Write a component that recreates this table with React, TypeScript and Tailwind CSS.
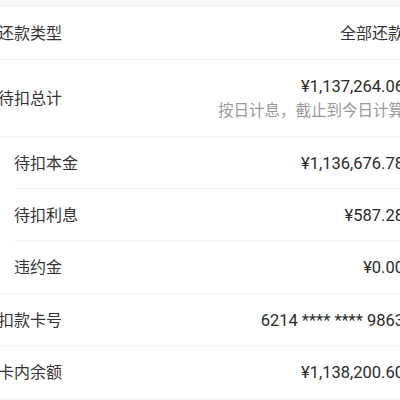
import React from "react";

const font = { fontFamily: "Roboto, 'Noto Sans CJK SC', sans-serif" };

function Row({ label, value, sub, indent, last }: { label: string; value: string; sub?: string; indent?: boolean; last?: boolean }) {
  return (
    <div className={indent ? "pl-4" : ""}>
      <div className={`flex items-center justify-between pt-[2px] ${sub ? "h-[77px]" : "h-[52px]"} ${last ? "" : "border-b border-[#f0f0f0]"}`}>
        <span className="text-[16px] text-[#333333]">{label}</span>
        <div className="flex flex-col items-end">
          <span className="text-[16.5px] text-[#2a2a2a] leading-[22px]">{value}</span>
          {sub && <span className="text-[15.5px] text-[#999999] leading-[22px] mt-[2px]">{sub}</span>}
        </div>
      </div>
    </div>
  );
}

export default function App() {
  return (
    <div className="w-[400px] h-[400px] overflow-hidden bg-[#f5f5f5]" style={font}>
      <div className="h-[7px]" />
      <div className="bg-white -ml-[2px] w-[406px]">
        <div className="flex items-center justify-between pt-[2px] h-[53px] border-b border-[#f0f0f0]">
          <span className="text-[16px] text-[#333333]">还款类型</span>
          <span className="text-[16px] text-[#333333]">全部还款</span>
        </div>
        <Row label="待扣总计" value="¥1,137,264.06" sub="按日计息，截止到今日计算" />
        <Row label="待扣本金" value="¥1,136,676.78" indent />
        <Row label="待扣利息" value="¥587.28" indent />
        <div className="border-b border-[#f0f0f0]">
          <Row label="违约金" value="¥0.00" indent last />
        </div>
        <Row label="扣款卡号" value="6214 **** **** 9863" />
        <Row label="卡内余额" value="¥1,138,200.60" last />
      </div>
    </div>
  );
}
